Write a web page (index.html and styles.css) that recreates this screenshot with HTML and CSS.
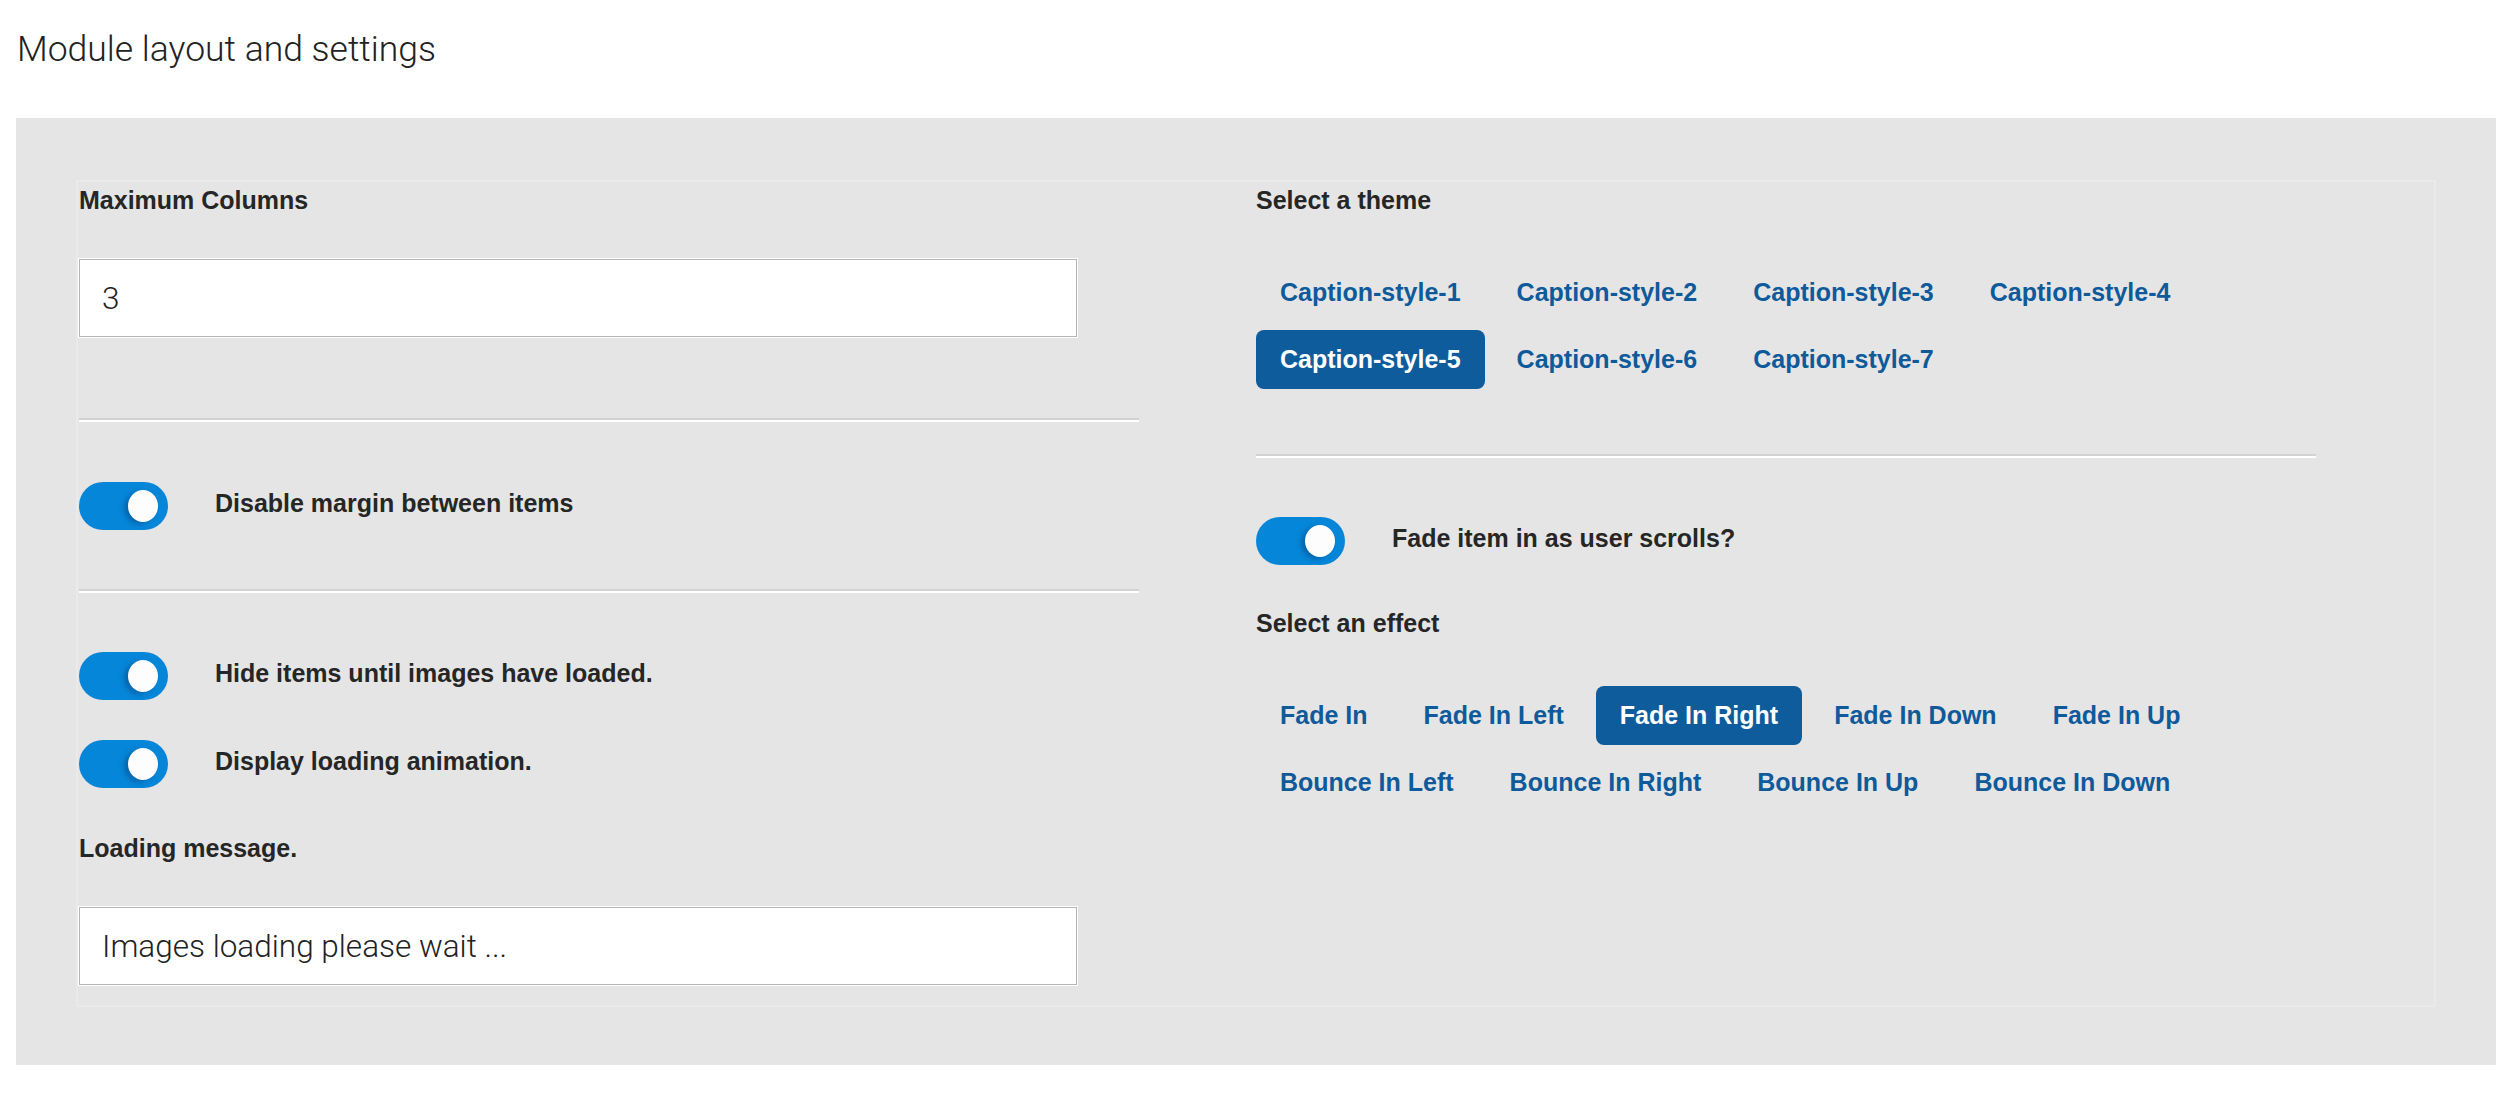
FILE: index.html
```html
<!DOCTYPE html>
<html lang="en">
<head>
<meta charset="utf-8">
<title>Module layout and settings</title>
<link rel="stylesheet" href="styles.css">
</head>
<body>
<div class="page">
  <h1 class="title">Module layout and settings</h1>
  <section class="panel">
    <div class="box">
      <div class="col">
        <label class="label">Maximum Columns</label>
        <input class="field field-first" type="text" value="3">
        <hr class="rule rule-a">
        <div class="switch-row switch-a">
          <span class="toggle"><span class="knob"></span></span>
          <span class="switch-label">Disable margin between items</span>
        </div>
        <hr class="rule rule-b">
        <div class="switch-row switch-b">
          <span class="toggle"><span class="knob"></span></span>
          <span class="switch-label">Hide items until images have loaded.</span>
        </div>
        <div class="switch-row switch-c">
          <span class="toggle"><span class="knob"></span></span>
          <span class="switch-label">Display loading animation.</span>
        </div>
        <label class="label label-loading">Loading message.</label>
        <input class="field field-first" type="text" value="Images loading please wait ...">
      </div>
      <div class="col">
        <label class="label">Select a theme</label>
        <div class="choices">
          <button type="button" class="choice">Caption-style-1</button>
          <button type="button" class="choice">Caption-style-2</button>
          <button type="button" class="choice">Caption-style-3</button>
          <button type="button" class="choice">Caption-style-4</button>
          <button type="button" class="choice active">Caption-style-5</button>
          <button type="button" class="choice">Caption-style-6</button>
          <button type="button" class="choice">Caption-style-7</button>
        </div>
        <hr class="rule rule-c">
        <div class="switch-row switch-d">
          <span class="toggle"><span class="knob"></span></span>
          <span class="switch-label">Fade item in as user scrolls?</span>
        </div>
        <label class="label label-effect">Select an effect</label>
        <div class="choices">
          <button type="button" class="choice">Fade In</button>
          <button type="button" class="choice">Fade In Left</button>
          <button type="button" class="choice active">Fade In Right</button>
          <button type="button" class="choice">Fade In Down</button>
          <button type="button" class="choice">Fade In Up</button>
          <button type="button" class="choice">Bounce In Left</button>
          <button type="button" class="choice">Bounce In Right</button>
          <button type="button" class="choice">Bounce In Up</button>
          <button type="button" class="choice">Bounce In Down</button>
        </div>
      </div>
    </div>
  </section>
</div>
</body>
</html>
```
FILE: styles.css
```css
html, body {
  margin: 0;
  padding: 0;
  background: #ffffff;
}

body {
  font-family: "Liberation Sans", Arial, Helvetica, sans-serif;
  color: #222222;
}

.page {
  padding: 0 22px 38px 16px;
}

.title {
  margin: 29px 0 49px 1px;
  font-family: Roboto, "Liberation Sans", Arial, sans-serif;
  font-size: 35.5px;
  line-height: 40px;
  font-weight: 300;
  color: #222222;
}

.panel {
  background: #e5e5e5;
  padding: 62px 60px 58px 60px;
}

.box {
  border: 2px solid #eaeaea;
  padding: 3px 1px 20px 1px;
  display: grid;
  grid-template-columns: 1fr 1fr;
}

.col {
  display: flex;
  flex-direction: column;
  align-items: flex-start;
  padding-right: 117px;
}

.label {
  display: block;
  font-size: 25px;
  line-height: 30px;
  font-weight: bold;
  color: #262626;
}

.field {
  box-sizing: border-box;
  width: calc(100% - 62px);
  height: 78px;
  margin: 44px 0 0 0;
  padding: 0 22px;
  border: 1px solid #b4b4b4;
  box-shadow: 0 0 0 1px #ffffff;
  border-radius: 0;
  background: #ffffff;
  font-family: Roboto, "Liberation Sans", Arial, sans-serif;
  font-size: 31.5px;
  font-weight: 300;
  color: #222222;
  outline: none;
}

.rule {
  align-self: stretch;
  height: 0;
  margin: 0;
  border: 0;
  border-top: 2px solid #d2d2d2;
  border-bottom: 2px solid #ffffff;
}

.rule-a { margin-top: 81px; }
.rule-b { margin-top: 59px; }
.rule-c { margin-top: 65px; }

.switch-row {
  display: flex;
  align-items: flex-start;
  gap: 47px;
}

.switch-a { margin-top: 60px; }
.switch-b { margin-top: 59px; }
.switch-c { margin-top: 40px; }
.switch-d { margin-top: 59px; }

.toggle {
  box-sizing: border-box;
  width: 89px;
  height: 48px;
  border-radius: 24px;
  background: #0686d9;
  display: flex;
  align-items: center;
  justify-content: flex-end;
  padding-right: 10px;
  flex: none;
}

.knob {
  width: 30px;
  height: 32px;
  border-radius: 50%;
  background: #fdfdfd;
  box-shadow: -4px 2px 5px rgba(0, 40, 90, 0.35);
}

.switch-label {
  margin-top: 6px;
  font-size: 25px;
  line-height: 30px;
  font-weight: bold;
  color: #262626;
}

.label-loading { margin-top: 45px; }
.label-effect { margin-top: 43px; }

.choices {
  margin-top: 48px;
  display: flex;
  flex-wrap: wrap;
  column-gap: 8px;
  row-gap: 8px;
  max-width: 1000px;
}

.choice {
  height: 59px;
  padding: 0 24px;
  margin: 0;
  border: 0;
  border-radius: 8px;
  background: transparent;
  font-family: "Liberation Sans", Arial, Helvetica, sans-serif;
  font-size: 25px;
  line-height: 59px;
  font-weight: bold;
  color: #0e5a9a;
  cursor: pointer;
}

.choice.active {
  background: #0e5c9c;
  color: #ffffff;
}
```
